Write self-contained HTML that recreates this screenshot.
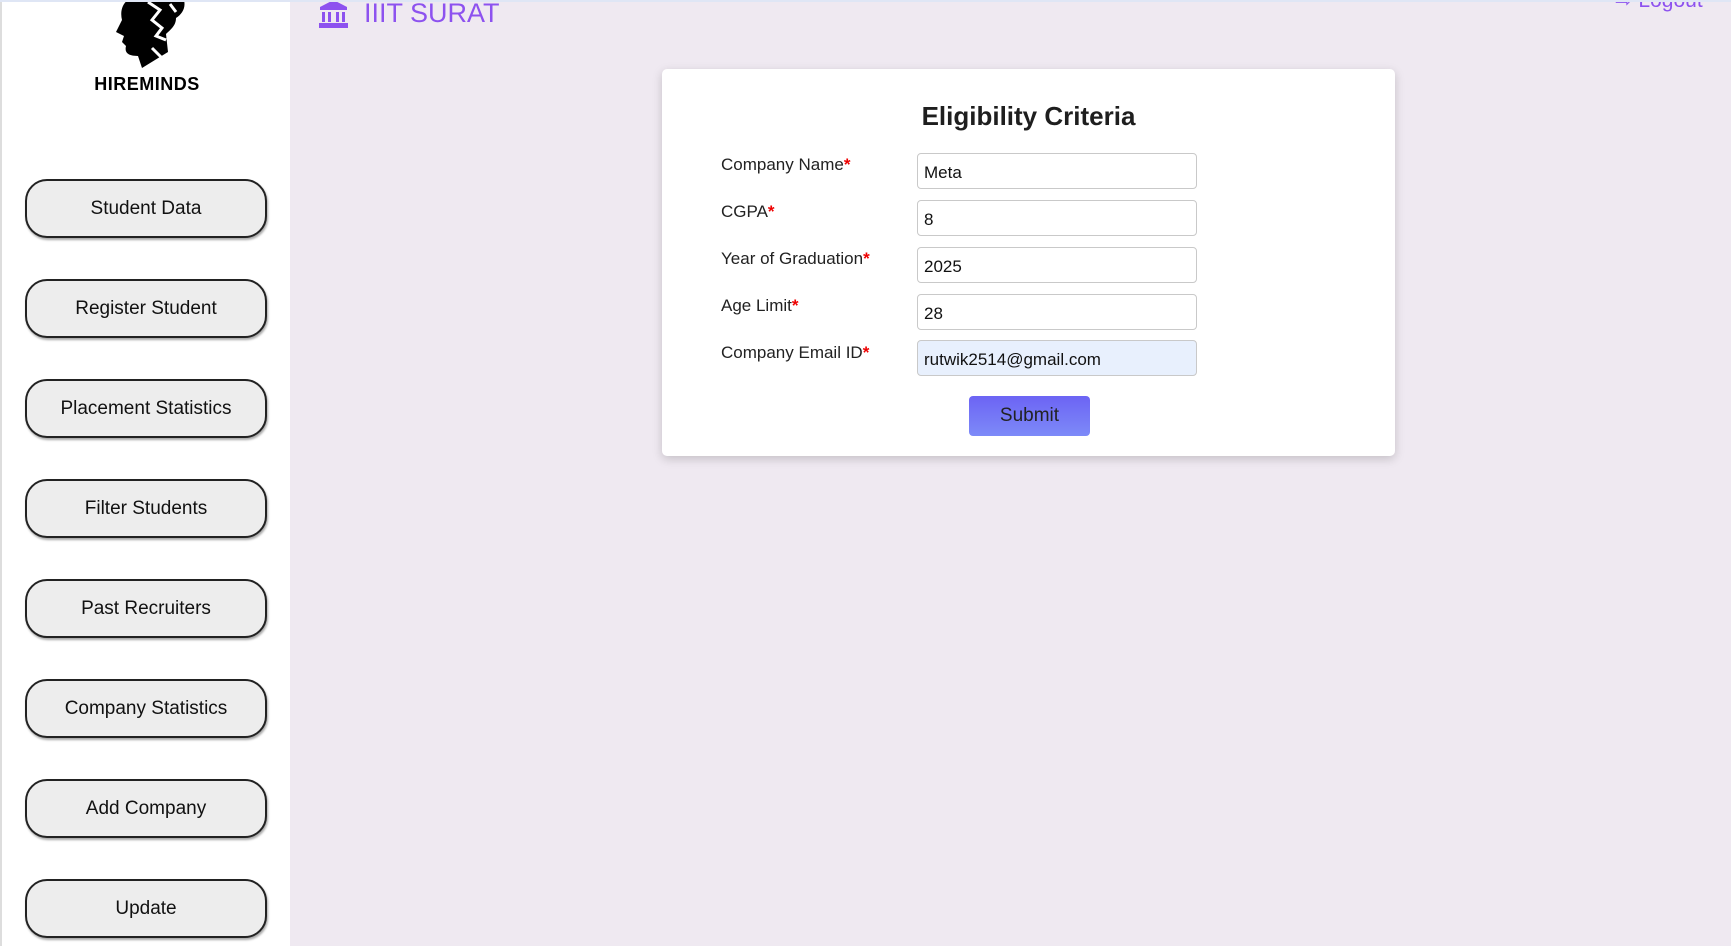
<!DOCTYPE html>
<html><head><meta charset="utf-8"><style>
*{box-sizing:border-box;margin:0;padding:0}
body{width:1731px;height:946px;overflow:hidden;background:#efe9f1;font-family:"Liberation Sans",sans-serif;position:relative}
.topline{position:absolute;left:0;top:0;width:1731px;height:2px;background:#dfe6f5;z-index:5}
.side{position:absolute;left:0;top:0;width:290px;height:946px;background:#fff;border-left:2px solid #ddd}
.brand{position:absolute;left:0;width:290px;top:74px;text-align:center;font-weight:bold;font-size:18px;letter-spacing:0.5px;color:#000}
.nb{position:absolute;left:23px;width:242px;height:59px;border:2px solid #222;border-radius:22px;background:#ededed;font-size:19px;color:#111;display:flex;align-items:center;justify-content:center;box-shadow:1px 2px 2px rgba(0,0,0,.35)}
.hdr{position:absolute;left:364px;top:-2px;font-size:27px;color:#8d52ef}
.logout{position:absolute;left:1615px;top:-12px;font-size:21px;color:#8d52ef}
.card{position:absolute;left:662px;top:69px;width:733px;height:387px;background:#fff;border-radius:5px;box-shadow:0 3px 10px rgba(0,0,0,.18)}
.title{position:absolute;left:0;width:100%;top:32px;text-align:center;font-size:26px;font-weight:bold;color:#1e1e1e}
.lbl{position:absolute;left:59px;font-size:17px;color:#222}
.lbl b{color:#e00;font-weight:bold}
.in{position:absolute;left:255px;width:280px;height:36px;border:1px solid #c9c9c9;border-radius:4px;background:#fff;font-size:17px;color:#111;padding:9px 0 0 6px}
.sub{position:absolute;left:307px;top:327px;width:121px;height:40px;border-radius:4px;background:linear-gradient(#6c64f4,#7d8af8);font-size:19px;color:#222;text-align:center;line-height:40px}
</style></head><body>
<div class="topline"></div>
<div class="side">
<svg style="position:absolute;left:108px;top:0" width="76" height="70" viewBox="0 0 76 70">
<path d="M18 0 L74 0 C76 8 72 14 66 18 C66 26 60 30 56 34 L58 52 L32 68 L28 56 C20 56 14 54 16 46 L12 42 L14 36 L6 32 L12 20 C10 12 12 4 18 0Z" fill="#000"/>
<path d="M38 2 L50 10 L42 20 L52 28 L46 36 L56 40 M42 48 L52 58 M60 4 L66 12" stroke="#fff" stroke-width="3" fill="none"/>
</svg>
<div class="brand">HIREMINDS</div>
<div class="nb" style="top:179px">Student Data</div>
<div class="nb" style="top:279px">Register Student</div>
<div class="nb" style="top:379px">Placement Statistics</div>
<div class="nb" style="top:479px">Filter Students</div>
<div class="nb" style="top:579px">Past Recruiters</div>
<div class="nb" style="top:679px">Company Statistics</div>
<div class="nb" style="top:779px">Add Company</div>
<div class="nb" style="top:879px">Update</div>
</div>
<svg style="position:absolute;left:319px;top:0" width="29" height="28" viewBox="0 0 29 28">
<path d="M14.5 0 L28 7 L28 10 L1 10 L1 7Z" fill="#8d52ef"/><rect x="3" y="12" width="3" height="10" fill="#8d52ef"/><rect x="9" y="12" width="3" height="10" fill="#8d52ef"/><rect x="17" y="12" width="3" height="10" fill="#8d52ef"/><rect x="23" y="12" width="3" height="10" fill="#8d52ef"/><rect x="0" y="23" width="29" height="5" fill="#8d52ef"/>
</svg>
<div class="hdr">IIIT SURAT</div>
<div class="logout">⇨ Logout</div>
<div class="card">
<div class="title">Eligibility Criteria</div>
<div class="lbl" style="top:86px">Company Name<b>*</b></div>
<div class="lbl" style="top:133px">CGPA<b>*</b></div>
<div class="lbl" style="top:180px">Year of Graduation<b>*</b></div>
<div class="lbl" style="top:227px">Age Limit<b>*</b></div>
<div class="lbl" style="top:274px">Company Email ID<b>*</b></div>
<div class="in" style="top:84px">Meta</div>
<div class="in" style="top:131px">8</div>
<div class="in" style="top:178px">2025</div>
<div class="in" style="top:225px">28</div>
<div class="in" style="top:271px;background:#e8f0fd">rutwik2514@gmail.com</div>
<div class="sub">Submit</div>
</div>
</body></html>
